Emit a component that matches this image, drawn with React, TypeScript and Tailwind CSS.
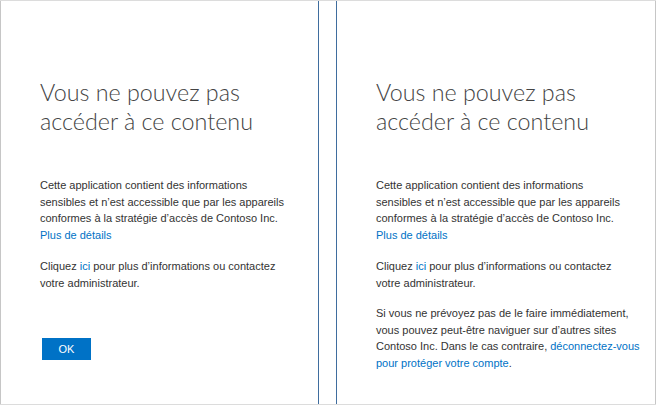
import React from "react";

const body = "font-['Liberation_Sans',Arial,sans-serif] text-[11px] leading-[16.5px] text-[#333333] whitespace-nowrap";
const link = "text-[#0072c6]";

function Title() {
  return (
    <h1 className="font-['Lato','Open_Sans',sans-serif] font-light text-[23.3px] leading-[29px] text-[#444444] whitespace-nowrap">
      Vous ne pouvez pas
      <br />
      accéder à ce contenu
    </h1>
  );
}

function Common() {
  return (
    <>
      <Title />
      <p className={`${body} mt-[41px]`}>
        Cette application contient des informations
        <br />
        sensibles et n’est accessible que par les appareils
        <br />
        conformes à la stratégie d’accès de Contoso Inc.
        <br />
        <span className={link}>Plus de détails</span>
      </p>
      <p className={`${body} mt-[15px]`}>
        Cliquez <span className={link}>ici</span> pour plus d’informations ou contactez
        <br />
        votre administrateur.
      </p>
    </>
  );
}

export default function App() {
  return (
    <div className="w-[656px] h-[405px] bg-white border-t border-b border-[#dcdcdc] flex overflow-hidden">
      <div className="w-[319px] h-full border-l border-l-[#c6c6c6] border-r border-r-[#3f6d9e] pl-[39px] pt-[77px] flex flex-col items-start">
        <Common />
        <button className="mt-[47px] ml-[2px] w-[49px] h-[22px] bg-[#0072c6] text-white font-['Liberation_Sans',Arial,sans-serif] text-[11px] flex items-center justify-center">
          OK
        </button>
      </div>
      <div className="w-[17px]" />
      <div className="flex-1 h-full border-l border-l-[#3f6d9e] border-r border-r-[#c6c6c6] pl-[39px] pt-[77px] flex flex-col items-start">
        <Common />
        <p className={`${body} mt-[14px]`}>
          Si vous ne prévoyez pas de le faire immédiatement,
          <br />
          vous pouvez peut-être naviguer sur d’autres sites
          <br />
          Contoso Inc. Dans le cas contraire, <span className={link}>déconnectez-vous</span>
          <br />
          <span className={link}>pour protéger votre compte</span>.
        </p>
      </div>
    </div>
  );
}
